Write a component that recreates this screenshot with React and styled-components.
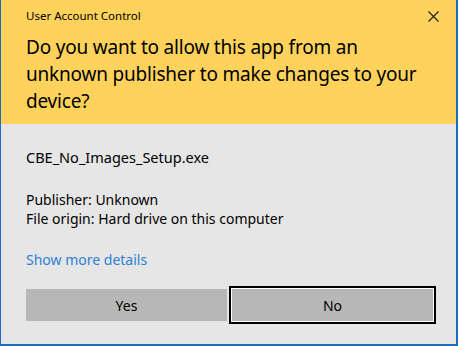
import React from 'react'
import styled, { createGlobalStyle } from 'styled-components'

const Global = createGlobalStyle`
  html, body {
    margin: 0;
    padding: 0;
    background: #e6e6e6;
  }
  * { box-sizing: border-box; }
`

function App() {
  return (
    <>
      <Global />
      <Window>
        <Header>
          <TitleBar>
            <Caption>User Account Control</Caption>
            <Close aria-label="Close">
              <svg width="11" height="11" viewBox="0 0 11 11">
                <path d="M0.5 0.5 L10.5 10.5 M10.5 0.5 L0.5 10.5" stroke="#1a1a1a" strokeWidth="1.1" fill="none" />
              </svg>
            </Close>
          </TitleBar>
          <Question>
            Do you want to allow this app from an unknown publisher to make changes to your device?
          </Question>
        </Header>
        <Body>
          <AppName>CBE_No_Images_Setup.exe</AppName>
          <Details>
            <Line>Publisher: Unknown</Line>
            <Line>File origin: Hard drive on this computer</Line>
          </Details>
          <MoreLink>Show more details</MoreLink>
          <Buttons>
            <Button>Yes</Button>
            <Button focused>No</Button>
          </Buttons>
        </Body>
      </Window>
    </>
  )
}

export default App

const Window = styled.div`
  width: 458px;
  height: 346px;
  display: flex;
  flex-direction: column;
  border-left: 1px solid #1c6cc0;
  border-right: 2px solid #1c6cc0;
  border-bottom: 2px solid #1c6cc0;
  font-family: "Noto Sans", "Open Sans", sans-serif;
  color: #000;
  background: #e6e6e6;
`
const Header = styled.div`
  height: 124px;
  background: #ffd35b;
  padding: 0 0 0 25px;
`
const TitleBar = styled.div`
  display: flex;
  align-items: center;
  justify-content: space-between;
  height: 32px;
  padding-right: 17px;
`
const Caption = styled.div`
  font-size: 11.5px;
  line-height: 16px;
`
const Close = styled.div`
  width: 11px;
  height: 11px;
  display: flex;
`
const Question = styled.div`
  margin-top: 2px;
  font-size: 19px;
  line-height: 27px;
  padding-right: 30px;
  letter-spacing: -0.2px;
  color: #000;
`
const Body = styled.div`
  flex: 1;
  padding: 22px 0 0 25px;
  display: flex;
  flex-direction: column;
`
const AppName = styled.div`
  font-size: 14.5px;
  line-height: 22px;
`
const Details = styled.div`
  margin-top: 22px;
  font-size: 14px;
  line-height: 19px;
`
const Line = styled.div``
const MoreLink = styled.div`
  margin-top: 22px;
  font-size: 14px;
  line-height: 20px;
  color: #2f80d6;
`
const Buttons = styled.div`
  display: flex;
  gap: 5px;
  margin-top: 19px;
`
const Button = styled.div`
  width: 201px;
  height: 32px;
  background: #b7b7b7;
  display: flex;
  align-items: center;
  justify-content: center;
  font-size: 14px;
  color: #000;
  box-shadow: ${p => (p.focused ? '0 0 0 1px #fff, 0 0 0 3px #000' : 'none')};
`
